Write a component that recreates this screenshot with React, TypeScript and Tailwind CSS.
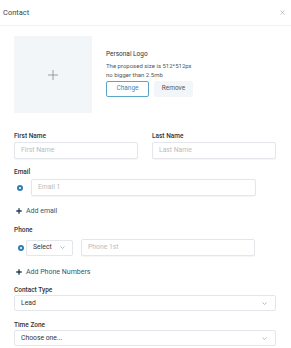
import React from "react";

const font = { fontFamily: "Roboto, 'Liberation Sans', sans-serif" };

function Label({ children, className = "" }: { children: React.ReactNode; className?: string }) {
  return (
    <div className={`h-[10px] text-[6.5px] leading-[10px] font-medium text-[#333] ${className}`}>{children}</div>
  );
}

function Input({ placeholder, className = "" }: { placeholder: string; className?: string }) {
  return (
    <div
      className={`flex h-[17px] items-center rounded-[2px] border border-[#e3e6ea] bg-white px-[6px] text-[6.8px] text-[#b8bcc2] shadow-[0_1px_1px_rgba(0,0,0,0.04)] ${className}`}
    >
      {placeholder}
    </div>
  );
}

function Chevron() {
  return (
    <svg width="5" height="3" viewBox="0 0 10 6" fill="none" stroke="#9aa0a6" strokeWidth="1.4">
      <path d="M1 1l4 4 4-4" />
    </svg>
  );
}

function Radio() {
  return (
    <div className="flex h-[6px] w-[6px] shrink-0 items-center justify-center rounded-full bg-[#2f7fb4]">
      <div className="h-[2px] w-[2px] rounded-full bg-white" />
    </div>
  );
}

function AddLink({ children, className = "" }: { children: React.ReactNode; className?: string }) {
  return (
    <div className={`flex h-[10px] items-center gap-[4px] pl-[2px] text-[7px] text-[#2b5b76] ${className}`}>
      <svg width="6" height="6" viewBox="0 0 10 10" stroke="#1f3f52" strokeWidth="2.2">
        <path d="M5 0.5v9M0.5 5h9" />
      </svg>
      {children}
    </div>
  );
}

function Select({ value, className = "" }: { value: string; className?: string }) {
  return (
    <div
      className={`flex h-[16px] items-center justify-between rounded-[2px] border border-[#e3e6ea] bg-white px-[6px] text-[6.8px] text-[#333] ${className}`}
    >
      <span>{value}</span>
      <Chevron />
    </div>
  );
}

export default function App() {
  return (
    <div className="h-[348px] w-[291px] overflow-hidden bg-white" style={font}>
      {/* Header */}
      <div className="flex h-[26px] items-center justify-between border-b border-[#f0f1f3] pl-[3px] pr-[6px]">
        <span className="text-[7.5px] text-[#444]">Contact</span>
        <svg width="5" height="5" viewBox="0 0 10 10" stroke="#a0a4a8" strokeWidth="1.2">
          <path d="M1 1l8 8M9 1l-8 8" />
        </svg>
      </div>

      <div className="pl-[14px] pr-[15px]">
        {/* Logo */}
        <div className="mt-[10px] flex items-center gap-[14px]">
          <div className="flex h-[77px] w-[78px] items-center justify-center bg-[#f2f6f9]">
            <svg width="10" height="10" viewBox="0 0 10 10" stroke="#8e9297" strokeWidth="0.9">
              <path d="M5 0v10M0 5h10" />
            </svg>
          </div>
          <div className="mt-[-2px] flex flex-col">
            <div className="text-[6.5px] leading-[9px] text-[#333]">Personal Logo</div>
            <div className="mt-[2px] text-[6px] leading-[9px] text-[#555]">The proposed size is 512*512px</div>
            <div className="text-[6px] leading-[9px] text-[#555]">no bigger than 2.5mb</div>
            <div className="mt-[2px] flex gap-[5px]">
              <div className="flex h-[16px] w-[43px] items-center justify-center rounded-[2px] border border-[#5aa5c8] text-[6.5px] text-[#3a8bb8]">
                Change
              </div>
              <div className="flex h-[16px] w-[39px] items-center justify-center rounded-[2px] bg-[#f3f6f8] text-[6.5px] text-[#555]">
                Remove
              </div>
            </div>
          </div>
        </div>

        {/* Names */}
        <div className="mt-[18px] grid grid-cols-2 gap-[14px]">
          <div>
            <Label>First Name</Label>
            <Input placeholder="First Name" className="mt-[1px]" />
          </div>
          <div>
            <Label>Last Name</Label>
            <Input placeholder="Last Name" className="mt-[1px]" />
          </div>
        </div>

        {/* Email */}
        <Label className="mt-[8px]">Email</Label>
        <div className="mt-[2px] flex items-center gap-[8px] pl-[3px]">
          <Radio />
          <Input placeholder="Email 1" className="h-[16px] w-[225px]" />
        </div>
        <AddLink className="mt-[10px]">Add email</AddLink>

        {/* Phone */}
        <Label className="mt-[9px]">Phone</Label>
        <div className="mt-[4px] flex items-center pl-[4px]">
          <Radio />
          <Select value="Select" className="ml-[2px] w-[47px] pr-[7px]" />
          <Input placeholder="Phone 1st" className="ml-[8px] h-[16px] w-[174px]" />
        </div>
        <AddLink className="mt-[11px]">Add Phone Numbers</AddLink>

        {/* Contact type */}
        <Label className="mt-[8px]">Contact Type</Label>
        <Select value="Lead" className="pr-[8px]" />

        {/* Time zone */}
        <Label className="mt-[9px]">Time Zone</Label>
        <Select value="Choose one..." className="pr-[8px]" />
      </div>
    </div>
  );
}
